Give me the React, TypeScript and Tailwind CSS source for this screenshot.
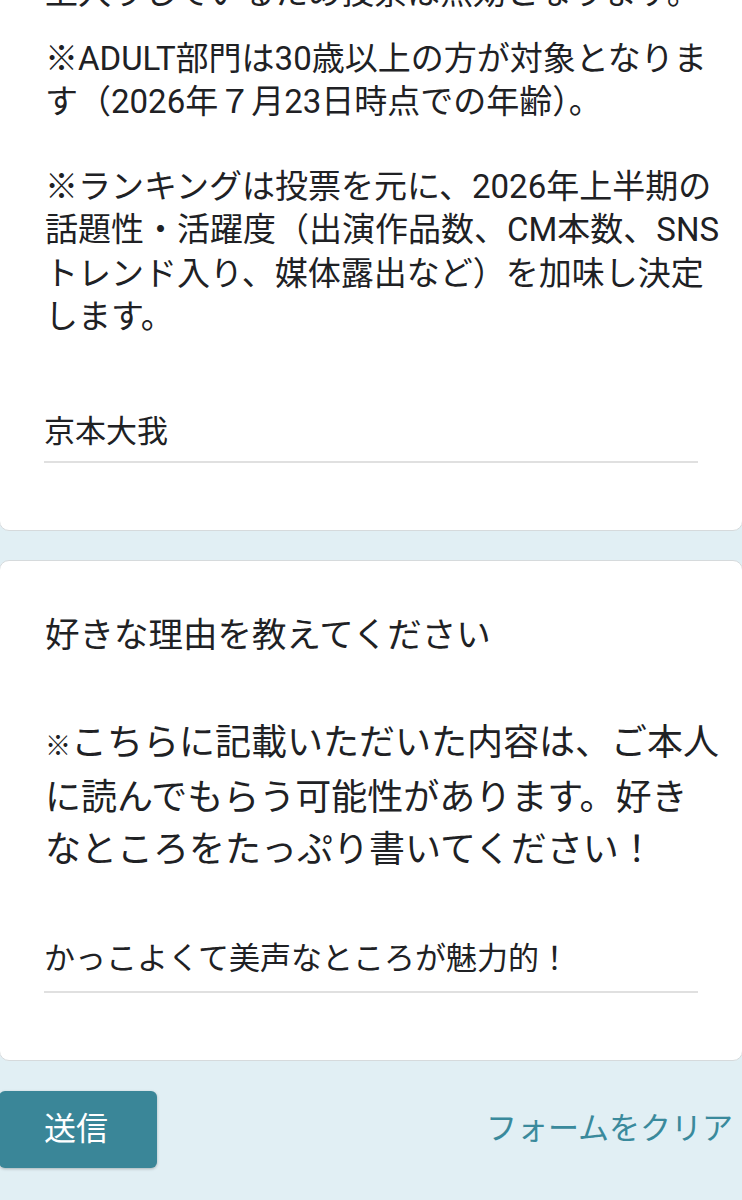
export default function App() {
  return (
    <div className="min-h-[1200px] overflow-hidden bg-[#e1eff4] font-[family-name:Roboto,'Noto_Sans_CJK_JP',sans-serif] text-[#202124]">
      {/* question card 1 (scrolled, top cut off) */}
      <div className="-mx-px -mt-[30px] rounded-b-[10px] border border-[#d6dadc] bg-white pb-[67px]">
        <div className="pl-[45px] pr-[17px] text-[33px] leading-[43.5px]">
          <p>上入りしているため投票は無効となります。</p>
          <p className="mt-[22px]">
            ※ADULT部門は30歳以上の方が対象となります（2026年７月23日時点での年齢）。
          </p>
          <p className="mt-[41px]">
            ※ランキングは投票を元に、2026年上半期の話題性・活躍度（出演作品数、CM本数、SNSトレンド入り、媒体露出など）を加味し決定します。
          </p>
        </div>
        <div className="ml-[44px] mr-[44px] mt-[73px]">
          <div className="text-[31px] leading-[40px]">京本大我</div>
          <div className="mt-[9px] h-[2px] bg-[#e0e0e0]" />
        </div>
      </div>

      {/* question card 2 */}
      <div className="-mx-px mt-[29px] rounded-[10px] border border-[#d6dadc] bg-white pb-[67px] pt-[52px]">
        <div className="pl-[45px] text-[34.5px] leading-[44px]">好きな理由を教えてください</div>
        <p className="mt-[60px] pl-[45px] text-[36px] leading-[52px]">
          <span className="text-[26px]">※</span>こちらに記載いただいた内容は、ご本人
          <br />
          に読んでもらう可能性があります。好き
          <br />
          なところをたっぷり書いてください！
        </p>
        <div className="ml-[44px] mr-[44px] mt-[63px]">
          <div className="text-[31px] leading-[40px]">かっこよくて美声なところが魅力的！</div>
          <div className="mt-[12px] h-[2px] bg-[#e0e0e0]" />
        </div>
      </div>

      {/* actions */}
      <div className="mt-[30px] flex items-center justify-between pr-[9px]">
        <button className="-ml-px flex h-[77px] w-[158px] items-center rounded-[6px] bg-[#3a8698] pl-[45px] text-[32px] text-white shadow-[0_1px_3px_rgba(0,0,0,0.25)]">
          送信
        </button>
        <span className="text-[31px] text-[#3a8a9c]">フォームをクリア</span>
      </div>
    </div>
  );
}
